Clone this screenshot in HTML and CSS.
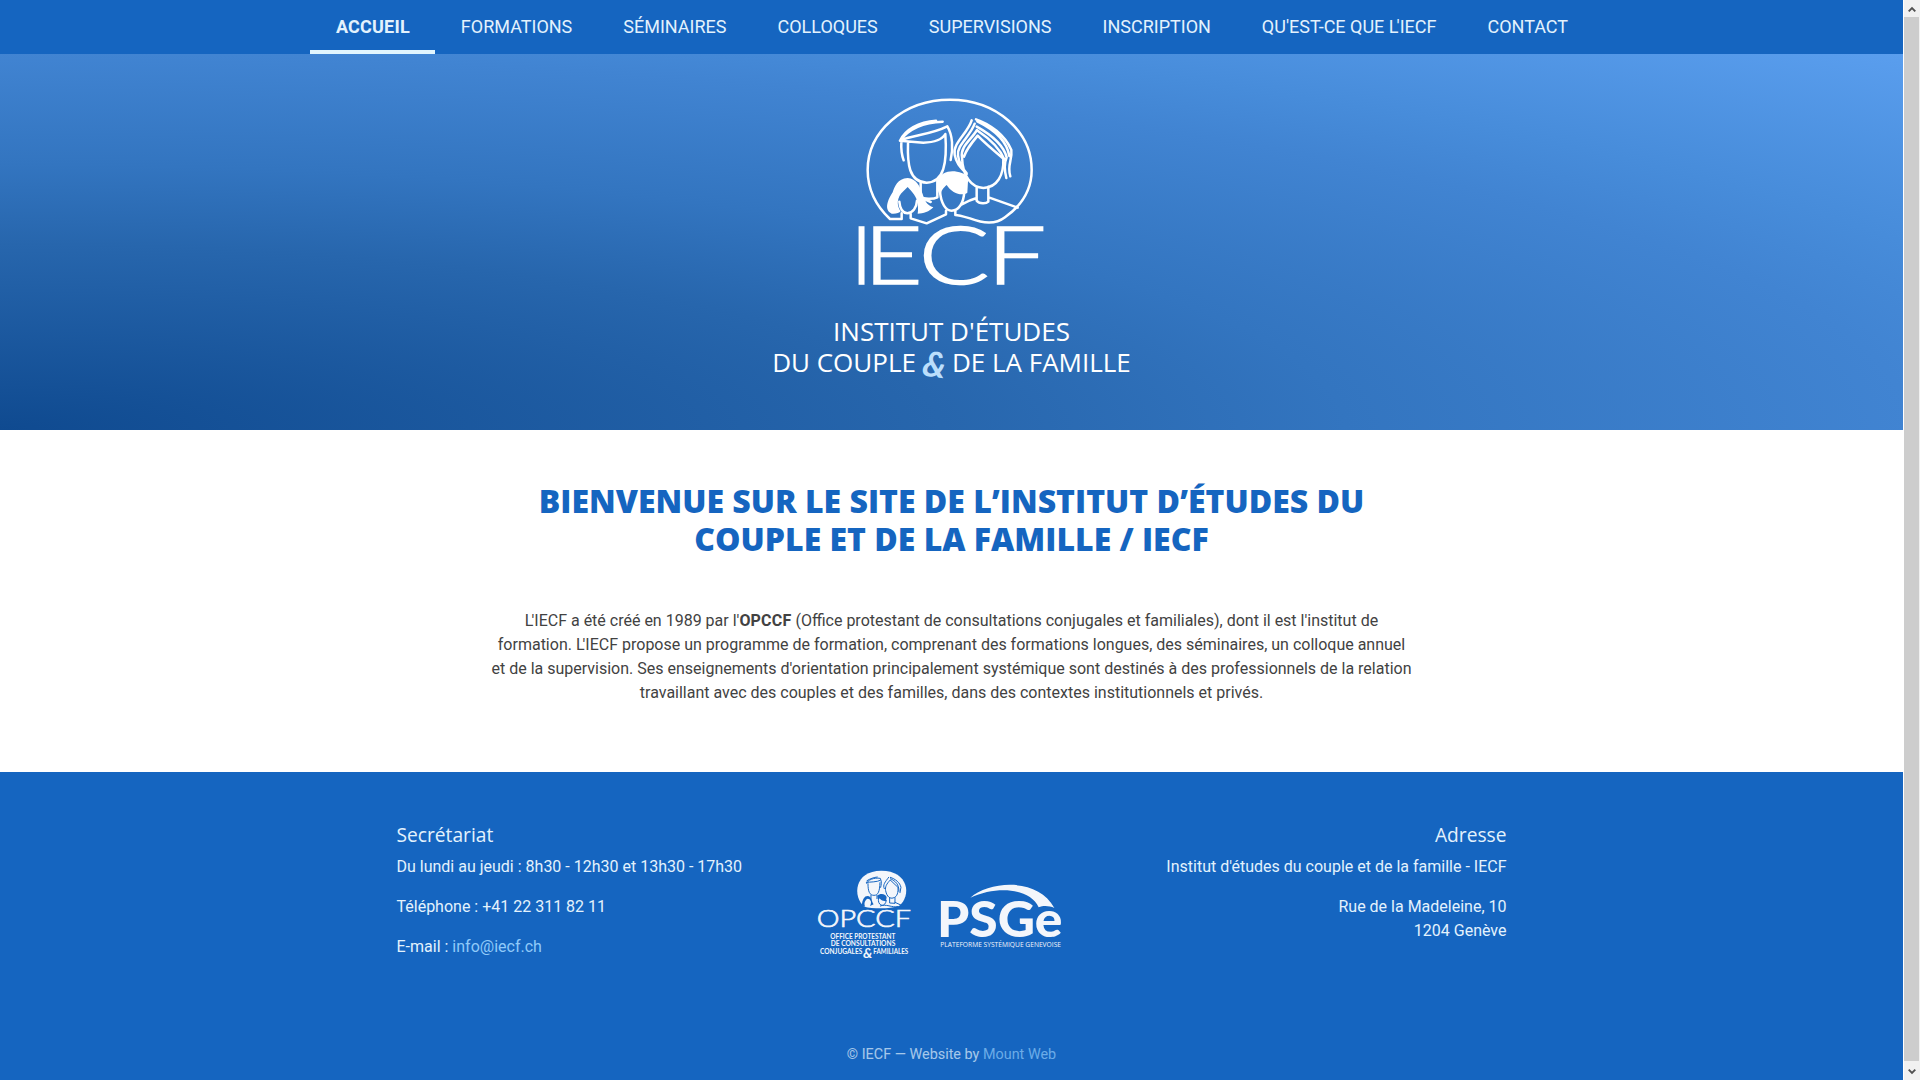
FILE: index.html
```html
<!DOCTYPE html>
<html lang="fr">
<head>
<meta charset="utf-8">
<title>IECF</title>
<link rel="stylesheet" href="styles.css">
</head>
<body>
<div class="page">
  <nav class="nav">
    <a class="nav-item active">ACCUEIL</a>
    <a class="nav-item">FORMATIONS</a>
    <a class="nav-item">SÉMINAIRES</a>
    <a class="nav-item">COLLOQUES</a>
    <a class="nav-item">SUPERVISIONS</a>
    <a class="nav-item">INSCRIPTION</a>
    <a class="nav-item">QU'EST-CE QUE <span class="kern">L</span>'IECF</a>
    <a class="nav-item">CONTACT</a>
  </nav>
  <header class="hero">
    <svg class="logo" viewBox="0 0 690 660">
      <g fill="none" stroke="#fff" stroke-width="7.5" stroke-linecap="round" stroke-linejoin="round">
        <path d="M185 417H150C105 375 83 325 83 270C83 155 190 59 330 59C470 59 575 155 575 270C575 330 547 375 495 412C465 435 430 430 390 415C365 408 350 405 346 405V392M318 392V403L260 430L212 415V402M185 400V417"/>
        <path d="M204 190C202 250 206 306 260 308C312 306 322 250 316 162C308 176 290 187 250 188L180 182C195 150 235 125 288 122M180 182C205 148 250 127 308 125M180 182C215 165 270 165 322 139C338 165 340 205 332 240M184 186C183 205 185 225 191 241"/>
        <path d="M242 307V350C250 358 280 358 292 352V302"/>
        <path d="M395 121C383 160 337 190 344 224C350 255 365 265 380 282M404 131C390 170 350 195 354 226C357 250 366 262 380 280M411 150C393 180 360 200 366 232C368 290 395 323 430 324C472 322 492 285 490 236C465 215 435 190 413 167C390 195 378 210 372 230"/>
        <path d="M408 118C450 132 495 165 514 210C518 240 500 255 511 289M410 140C455 165 490 195 500 232C490 255 494 275 499 294M412 124C455 145 500 180 508 228M414 153C450 177 480 207 494 240"/>
        <path d="M410 323V362C418 372 438 372 445 365V320M446 352L533 383M410 354C392 359 378 366 364 374M250 356L272 366M300 335C303 370 317 392 335 392C356 392 371 370 373 335M178 365C180 389 190 399 202 400C218 399 230 383 231 362"/>
      </g>
      <path fill="#fff" d="M203 294C172 296 164 320 158 337C143 360 131 390 155 401C168 402 178 399 182 394C169 377 170 352 190 334L203 321C215 335 232 350 233 372C235 388 234 395 233 401C250 401 268 395 280 382C261 376 254 362 248 342C239 318 229 296 203 294ZM292 302C302 278 327 270 351 275C372 279 386 285 384 304L382 338C367 350 335 340 320 315C310 324 303 330 302 348C294 336 288 320 292 302Z"/>
      <g class="logo-name">
        <text transform="translate(33 611)">I</text>
        <text transform="translate(71 611) scale(1.25 1)">E</text>
        <text transform="translate(236 611) scale(1.29 1)">C</text>
        <text transform="translate(441 611) scale(1.29 1)">F</text>
      </g>
    </svg>
    <p class="tagline">INSTITUT D'ÉTUDES<br>DU COUPLE <span class="amp">&amp;</span> DE LA FAMILLE</p>
  </header>
  <main class="intro">
    <h1>BIENVENUE SUR LE SITE DE L’INSTITUT D’ÉTUDES DU COUPLE ET DE LA FAMILLE / IECF</h1>
    <p><span class="kern">L</span>'IECF a été créé en 1989 par l'<b>OPCCF</b> (Office protestant de consultations conjugales et familiales), dont il est l'institut de formation. <span class="kern">L</span>'IECF propose un programme de formation, comprenant des formations longues, des séminaires, un colloque annuel et de la supervision. Ses enseignements d'orientation principalement systémique sont destinés à des professionnels de la relation travaillant avec des couples et des familles, dans des contextes institutionnels et privés.</p>
  </main>
  <footer class="footer">
    <div class="footer-cols">
      <section class="office">
        <h2>Secrétariat</h2>
        <p>Du lundi au jeudi : 8h30 - 12h30 et 13h30 - 17h30</p>
        <p>Téléphone : +41 22 311 82 11</p>
        <p>E-mail : <a>info@iecf.ch</a></p>
      </section>
      <div class="partners">
        <svg class="opccf" viewBox="54 60 280 270">
          <path fill="#f3f6fb" d="M196 170C160 140 165 62 247 62C330 62 338 138 300 168C270 178 220 176 196 170Z"/>
          <g fill="none" stroke="#1665c1" stroke-width="3" stroke-linecap="round">
            <path d="M203 100C205 90 225 82 244 85C249 96 247 104 245 112M202 97C215 96 235 96 244 91M204 92C213 86 225 82 235 81M207 101C207 125 212 136 225 136C238 136 242 124 243 98M216 136V150M234 136V146"/>
            <path d="M269 82C259 96 250 104 256 116M274 90C262 102 258 111 260 122C264 142 274 146 282 144C296 141 298 125 297 112L274 90M274 82C290 87 303 98 306 112L303 128M275 86C290 94 300 102 300 124M272 143V159L288 160V143M288 157L310 167M244 168C260 160 280 174 296 170"/>
          </g>
          <path fill="#1665c1" d="M188 168C190 148 196 138 206 138C218 138 218 155 224 163L213 168C220 155 214 146 206 146C197 150 194 162 199 170ZM235 138C242 128 262 131 263 142L261 154C248 153 244 148 241 145L238 154Z"/>
          <path fill="none" stroke="#1665c1" stroke-width="3" d="M238 151C240 171 260 171 262 150"/>
          <g fill="#f3f6fb">
            <text class="opccf-name" x="53" y="232" textLength="283" lengthAdjust="spacingAndGlyphs">OPCCF</text>
            <text class="opccf-line" x="94" y="266" textLength="195" lengthAdjust="spacingAndGlyphs">OFFICE PROTESTANT</text>
            <text class="opccf-line" x="95" y="289" textLength="194" lengthAdjust="spacingAndGlyphs">DE CONSULTATIONS</text>
            <text class="opccf-line" x="63" y="312" textLength="127" lengthAdjust="spacingAndGlyphs">CONJUGALES</text>
            <text class="opccf-amp" x="192" y="324" textLength="28" lengthAdjust="spacingAndGlyphs">&amp;</text>
            <text class="opccf-line" x="223" y="312" textLength="105" lengthAdjust="spacingAndGlyphs">FAMILIALES</text>
          </g>
        </svg>
        <svg class="psge" viewBox="420 100 366 194">
          <g fill="#f3f6fb">
            <path d="M511 141C570 90 715 80 763 172C748 165 730 164 716 170C690 112 590 105 511 141Z"/>
            <text class="psge-name" x="411" y="259" textLength="376" lengthAdjust="spacingAndGlyphs">PSGe</text>
            <text class="psge-line" x="421" y="290" textLength="362" lengthAdjust="spacingAndGlyphs">PLATEFORME SYSTÉMIQUE GENEVOISE</text>
          </g>
        </svg>
      </div>
      <section class="address">
        <h2>Adresse</h2>
        <p>Institut d'études du couple et de la famille - IECF</p>
        <p>Rue de la Madeleine, 10<br>1204 Genève</p>
      </section>
    </div>
    <p class="copyright">© IECF — Website by <a>Mount Web</a></p>
  </footer>
</div>
<aside class="scrollbar">
  <svg viewBox="0 0 17 17"><path d="M5 11.5L8.5 8L12 11.5"/></svg>
  <div class="thumb"></div>
  <svg viewBox="0 0 17 17"><path d="M5 7.5L8.5 11L12 7.5"/></svg>
</aside>
</body>
</html>
```
FILE: styles.css
```css
* { box-sizing: border-box; }
body {
  margin: 0;
  height: 1080px;
  overflow: hidden;
  display: flex;
  font: 16px/24px Roboto, sans-serif;
  color: #424242;
}
h1, h2, p { margin: 0; }
.page { flex: 1; display: flex; flex-direction: column; }
.kern { letter-spacing: -2px; }

.nav {
  height: 54px;
  background: #1565c0;
  display: flex;
  justify-content: center;
  padding-left: 1px;
}
.nav-item {
  height: 54px;
  padding: 0 25.5px;
  font-size: 18px;
  line-height: 54px;
  color: #e3f2fd;
  white-space: nowrap;
}
.nav-item.active { font-weight: 700; letter-spacing: .2px; border-bottom: 4px solid #e1f5fe; }

.hero {
  height: 376px;
  background: radial-gradient(farthest-corner at 0 100%, #0f4a90 0%, #2766ad 35%, #3375c0 50%, #4184d2 71%, #478cda 79%, #5a9eee 100%);
  text-align: center;
  padding-top: 26px;
}
.logo { display: block; width: 230px; height: 220px; margin: 0 auto; transform: translateX(3px); overflow: visible; }
.logo-name { font: 300 243px Lato, sans-serif; fill: #fff; stroke: #fff; stroke-width: 5; }
.tagline {
  margin-top: 16px;
  font: 26px/31px "Open Sans", sans-serif;
  color: #fff;
}
.amp {
  display: inline-block;
  font: italic 700 35px/20px Lato, sans-serif;
  color: #bbdefb;
  vertical-align: -5px;
  margin: 0 -1px 0 0;
  transform: rotate(8deg);
}

.intro { height: 342px; padding-top: 52px; text-align: center; }
.intro h1 {
  width: 930px;
  margin: 0 auto 50px;
  font: 800 32px/38.4px "Open Sans", sans-serif;
  color: #1565c0;
}
.intro p { width: 922px; margin: 0 auto; }
.intro b { letter-spacing: .2px; }

.footer { flex: 1; background: #1565c0; color: #e3f2fd; }
.footer-cols {
  width: 1110px;
  height: 242px;
  margin: 0 auto;
  padding-top: 50px;
  display: grid;
  grid-template-columns: 370px 370px 370px;
}
.footer h2 { font: 19.2px/26px "Open Sans", sans-serif; margin-bottom: 7px; }
.footer-cols p { margin-bottom: 16px; }
.footer a { color: #90caf9; }
.address { text-align: right; }
.partners { display: flex; justify-content: center; gap: 29px; padding: 48px 24px 0 0; }
.partners svg { overflow: visible; }
.opccf { width: 93.3px; height: 90px; }
.psge { width: 122px; height: 64.7px; margin-top: 14px; }
.opccf-name { font: 300 69px Lato, sans-serif; stroke: #f3f6fb; stroke-width: 2; }
.opccf-line { font: 700 20px Lato, sans-serif; }
.opccf-amp { font: italic 700 38px Lato, sans-serif; }
.psge-name { font: 900 148px Lato, sans-serif; }
.psge-line { font: 21px "Open Sans", sans-serif; }
.copyright { margin-top: 29px; text-align: center; font-size: 14.4px; opacity: .7; }

.scrollbar { width: 17px; background: #f1f1f1; display: flex; flex-direction: column; border-left: 1px solid #fff; }
.scrollbar svg { width: 16px; height: 17px; fill: none; stroke: #505050; stroke-width: 2; }
.scrollbar svg:last-child { height: 19px; }
.thumb { flex: 1; margin-right: 1px; background: #cdcdcd; }
```
